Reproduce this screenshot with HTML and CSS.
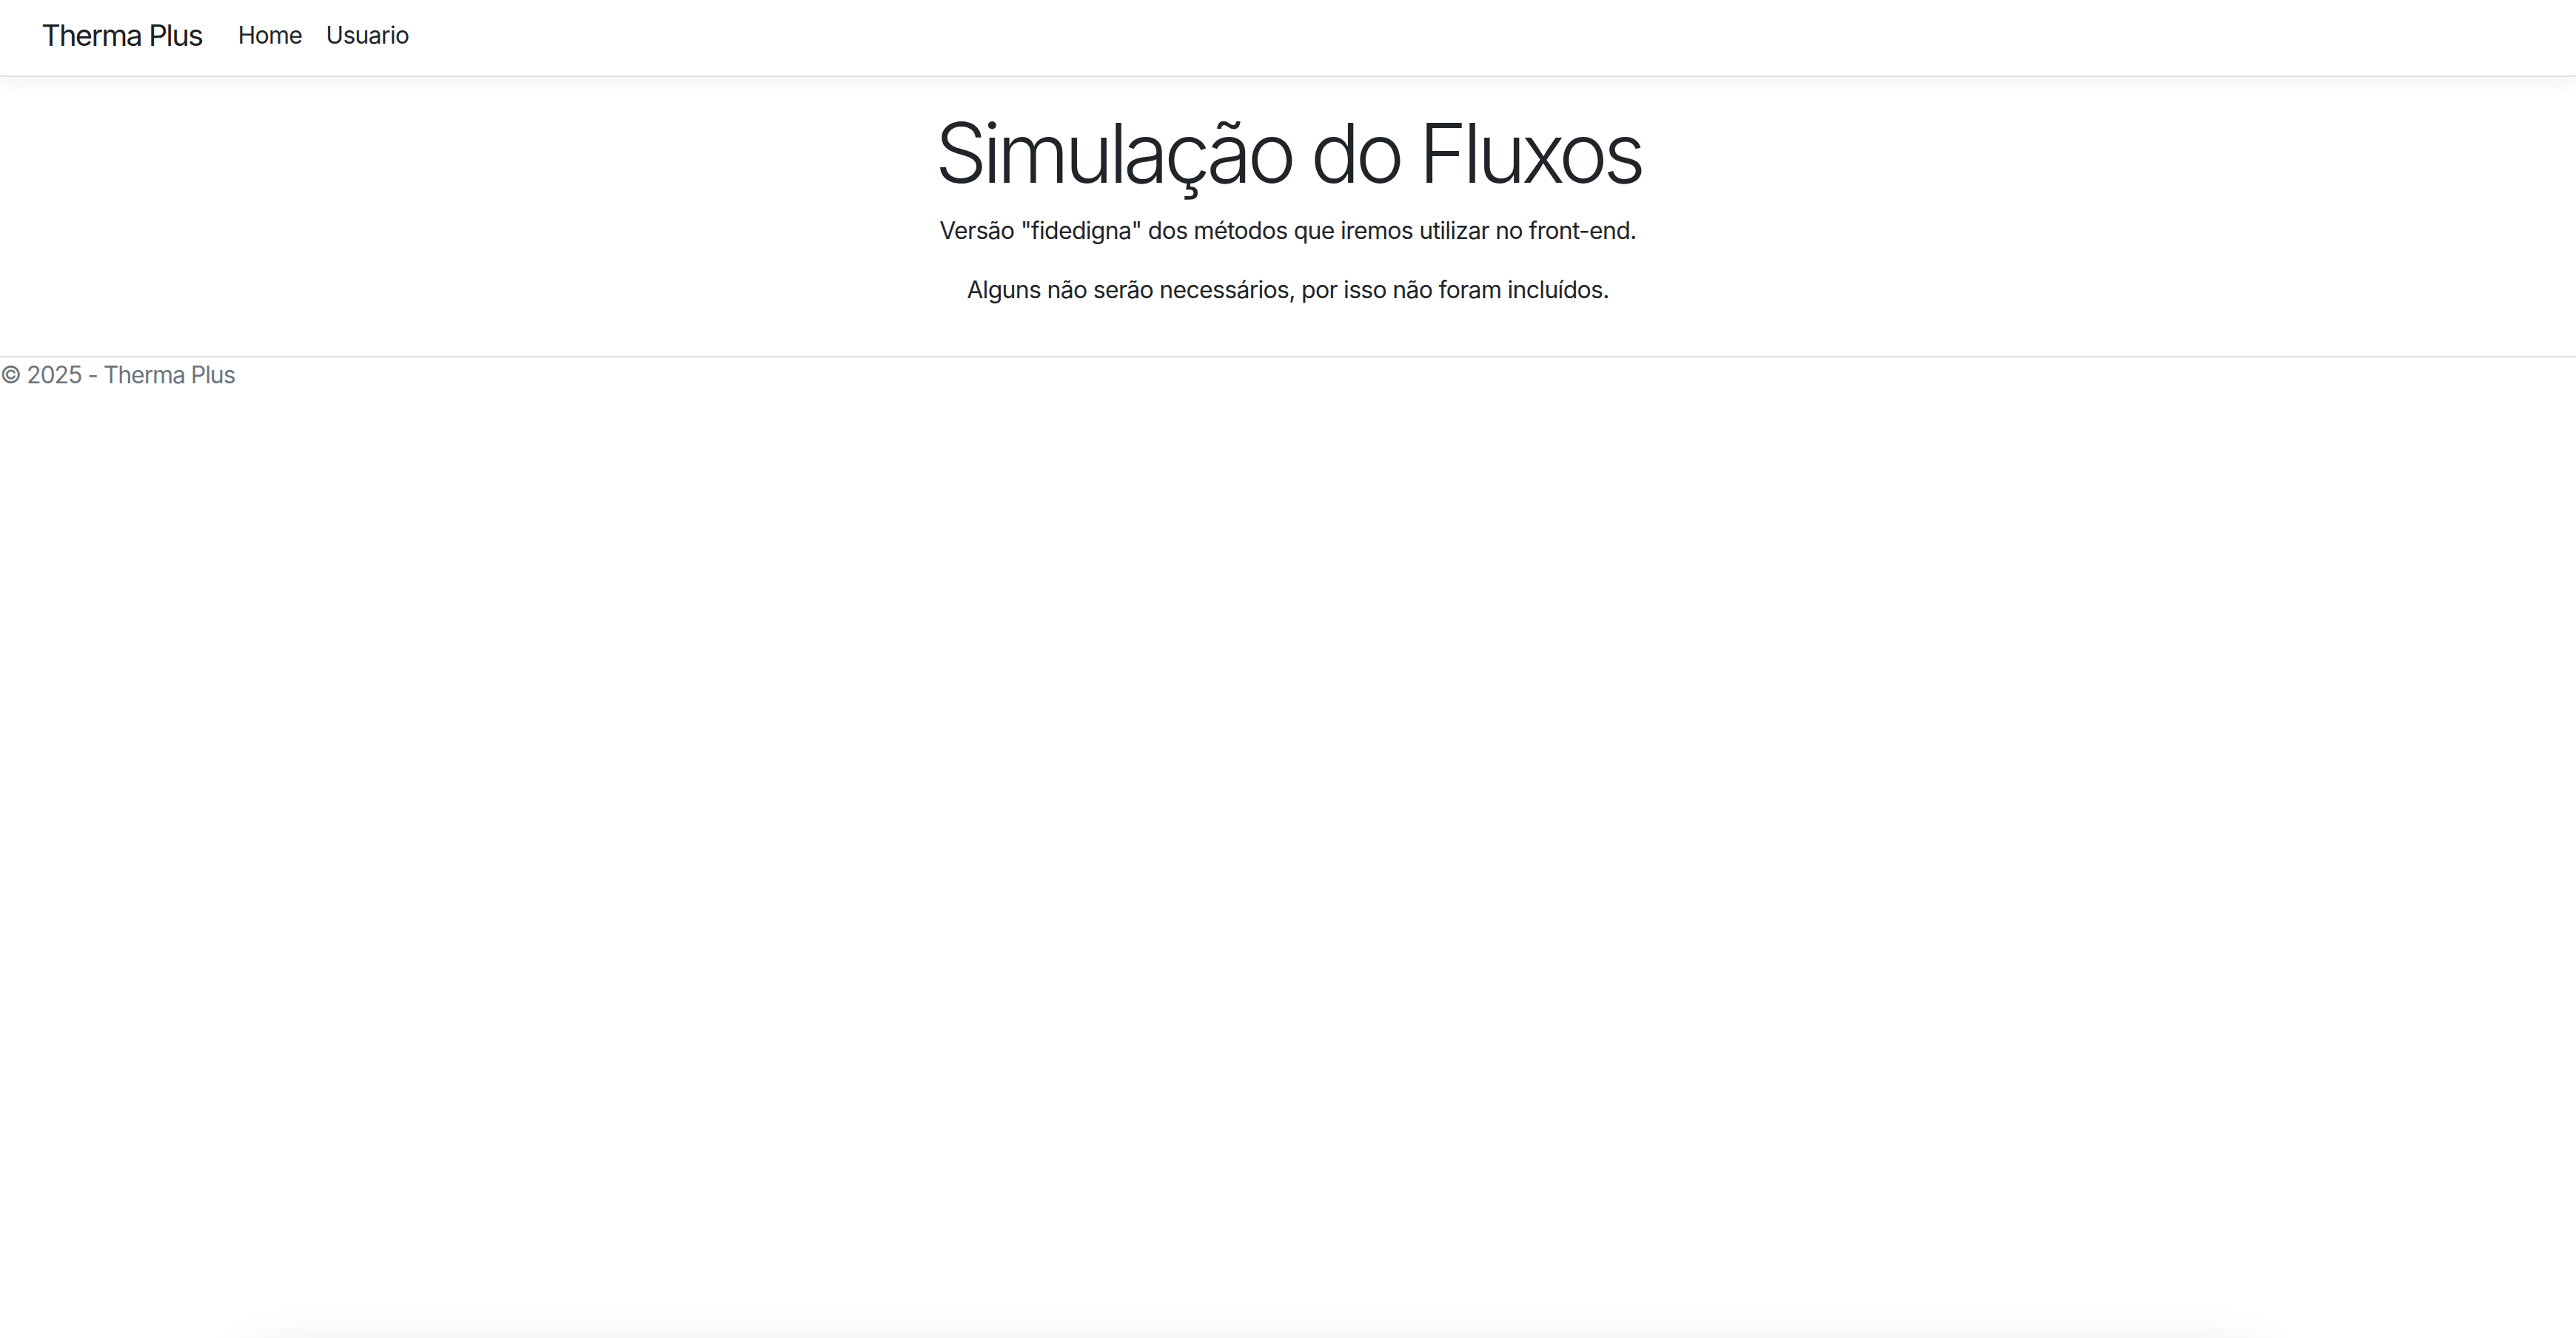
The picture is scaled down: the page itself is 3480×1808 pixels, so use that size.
FILE: index.html
```html
<!DOCTYPE html>
<html lang="pt-BR">
<head>
<meta charset="utf-8">
<title>Home Page - Therma Plus</title>
<link rel="stylesheet" href="styles.css">
</head>
<body>
<header class="site-header">
  <nav class="navbar">
    <a class="brand" href="#">Therma Plus</a>
    <ul class="nav-list">
      <li><a class="nav-link" href="#">Home</a></li>
      <li><a class="nav-link" href="#">Usuario</a></li>
    </ul>
  </nav>
</header>
<div class="container">
  <main class="main">
    <div class="text-center">
      <h1 class="display">Simulação do Fluxos</h1>
      <p class="lead-line">Versão "fidedigna" dos métodos que iremos utilizar no front-end.</p>
      <p class="lead-line">Alguns não serão necessários, por isso não foram incluídos.</p>
    </div>
  </main>
</div>
<footer class="footer">&copy; 2025 - Therma Plus</footer>
<div class="bottom-shadow"></div>
</body>
</html>
```
FILE: styles.css
```css
html, body {
  margin: 0;
  padding: 0;
  background: #fff;
}
body {
  font-family: Inter, "Noto Sans", "Liberation Sans", sans-serif;
  font-size: 32px;
  line-height: 48px;
  letter-spacing: -0.7px;
  color: #212529;
  min-height: 1808px;
  overflow: hidden;
}
a { text-decoration: none; }

.site-header {
  margin-bottom: 35px;
}
.navbar {
  display: flex;
  align-items: flex-start;
  height: 84px;
  padding: 18px 0 0 56px;
  border-bottom: 2px solid #dee2e6;
  box-shadow: 0 8px 24px rgba(0, 0, 0, 0.05);
  background: #fff;
}
.brand {
  font-size: 40px;
  line-height: 60px;
  letter-spacing: -1.8px;
  color: rgba(0, 0, 0, 0.9);
  margin-right: 32px;
  white-space: nowrap;
}
.nav-list {
  display: flex;
  list-style: none;
  margin: 6px 0 0 0;
  padding: 0;
}
.nav-link {
  display: block;
  padding: 0 16px;
  font-size: 32px;
  line-height: 48px;
  color: #212529;
}

.main {
  padding-bottom: 33px;
}
.text-center {
  text-align: center;
}
.display {
  font-size: 112px;
  font-weight: 300;
  line-height: 1.2;
  letter-spacing: -6.4px;
  margin: 0 0 15px 0;
  color: #212529;
}
.lead-line {
  margin: 0 0 32px 0;
}

.footer {
  border-top: 2px solid #dee2e6;
  color: #6c757d;
  font-size: 32px;
  line-height: 48px;
  letter-spacing: -1.1px;
  white-space: nowrap;
}

.bottom-shadow {
  position: fixed;
  left: 330px;
  right: 420px;
  top: 1830px;
  height: 200px;
  border-radius: 40px;
  background: #fff;
  box-shadow: 0 0 70px rgba(0, 0, 0, 0.12);
}
```
